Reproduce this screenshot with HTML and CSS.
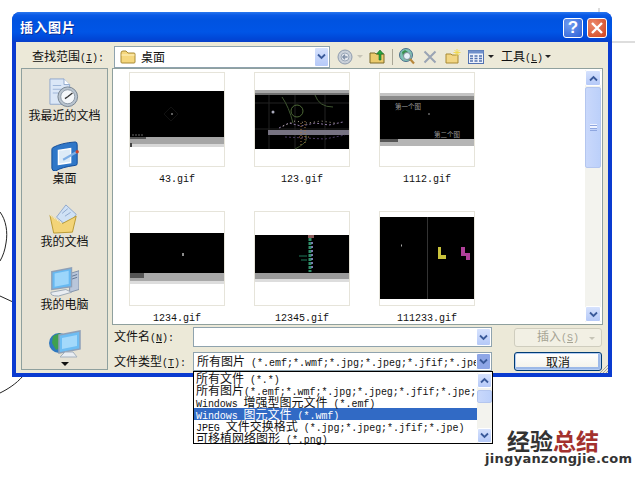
FILE: index.html
```html
<!DOCTYPE html>
<html lang="zh">
<head>
<meta charset="utf-8">
<title>插入图片</title>
<link rel="stylesheet" href="styles.css">
</head>
<body>
<svg class="backdrop" width="635" height="477" viewBox="0 0 635 477">
  <path d="M0 212C6 220 8 232 6 243C5 250 3 256 0 261M0 296L13 302M23 376C16 384 8 389 0 393" class="ink"/>
  <path d="M599 8V13M612 42H635" class="faint"/>
</svg>
<section class="dialog">
  <header class="titlebar">
    <h1 class="title">插入图片</h1>
    <div class="winbtns">
      <span class="winbtn help">?</span>
      <span class="winbtn close"><svg width="14" height="14" viewBox="0 0 14 14"><path d="M2 2L12 12M12 2L2 12" class="closex"/></svg></span>
    </div>
  </header>
  <div class="client">
    <div class="lookup">
      <label class="lookup-label">查找范围<span class="m">(<u>I</u>):</span></label>
      <div class="combo folder-combo">
        <svg class="ficon" width="16" height="14" viewBox="0 0 16 14"><path d="M1 3Q1 1 3 1H6L8 3H14Q15 3 15 4V12Q15 13 14 13H2Q1 13 1 12Z" fill="#f5d77e" stroke="#a88a35"/><path d="M1.500 5H14.500" stroke="#fff3c4"/></svg>
        <span class="combo-text">桌面</span>
        <span class="chev"><svg width="9" height="7" viewBox="0 0 9 7"><path d="M1 1.500L4.500 5L8 1.500" class="chevron"/></svg></span>
      </div>
      <div class="tools">
        <svg class="t-back" width="16" height="16" viewBox="0 0 16 16"><circle cx="8" cy="8" r="7" fill="#c9d0d8" stroke="#8f9cae"/><circle cx="8" cy="8" r="4" fill="#e6e9ee" stroke="#9aa7b8"/><path d="M10.500 8H6M8 5.800L5.800 8L8 10.200" fill="none" stroke="#7f8fa6" stroke-width="1.300"/></svg>
        <i class="mini-arrow dim"></i>
        <svg class="t-up" width="16" height="15" viewBox="0 0 16 15"><path d="M1 4H6L7 5H15V14H1Z" fill="#eccb6d" stroke="#7d6a2b"/><path d="M10 11V5H7.500L11 1L14.500 5H12V11Z" fill="#2aa53c" stroke="#14682a" stroke-width=".6"/></svg>
        <i class="sep"></i>
        <svg class="t-web" width="16" height="17" viewBox="0 0 16 17"><circle cx="7" cy="7" r="6.500" fill="#7fc2b4" stroke="#4c6f8c"/><path d="M3 4L6 2L9 4L7 7L4 8ZM8 9L11 8L11 11L9 12Z" fill="#3a8f4e"/><circle cx="8" cy="8" r="3.500" fill="#e6f1f7" stroke="#7f8b98"/><path d="M11 11L15 15.500" stroke="#b7873c" stroke-width="2.200"/></svg>
        <svg class="t-del" width="14" height="14" viewBox="0 0 14 14"><path d="M1.500 1.500L12.500 12.500M12.500 1.500L1.500 12.500" stroke="#9aa4b4" stroke-width="2"/></svg>
        <svg class="t-new" width="16" height="15" viewBox="0 0 16 15"><path d="M1 5H6L7 6H13V14H1Z" fill="#f2d684" stroke="#a88a35"/><path d="M12 0V7M8.500 3.500H15.500M9.500 1L14.500 6M14.500 1L9.500 6" stroke="#f1d84a" stroke-width=".9"/></svg>
        <svg class="t-view" width="16" height="14" viewBox="0 0 16 14"><rect x=".5" y=".5" width="15" height="13" fill="#eef2fb" stroke="#5272b0"/><rect x=".5" y=".5" width="15" height="3" fill="#6f8fcb"/><path d="M2 6H5M2 8.500H5M2 11H5M6.500 6H9.500M6.500 8.500H9.500M6.500 11H9.500M11 6H14M11 8.500H14M11 11H14" stroke="#5272b0" stroke-width="1.300"/></svg>
        <i class="mini-arrow"></i>
        <span class="tool-menu">工具<span class="m">(<u>L</u>)</span></span>
        <i class="mini-arrow tight"></i>
      </div>
    </div>
    <div class="main">
      <nav class="rail">
        <a class="place">
          <svg class="place-icon" width="30" height="30" viewBox="0 0 32 32"><path d="M1 1H16L22 7V28H1Z" fill="#dbe7f7" stroke="#8ea6cc"/><path d="M16 1V7H22" fill="#fff" stroke="#8ea6cc"/><path d="M4 8H13M4 12H13M4 16H10" stroke="#9bb3d6"/><circle cx="20" cy="20" r="10.500" fill="#b9c4cf" stroke="#75828f"/><circle cx="20" cy="20" r="7.500" fill="#f4f7fa" stroke="#8c98a5"/><path d="M20 20L25 16M20 20L17 22" stroke="#333" stroke-width="1.400"/></svg>
          <span class="place-label">我最近的文档</span>
        </a>
        <a class="place">
          <svg class="place-icon" width="30" height="30" viewBox="0 0 32 32"><path d="M3 7Q12 2 27 1Q29 1 29 4L29 24Q29 26 27 26Q12 28 6 32Q2 32 2 29V9Q2 8 3 7Z" fill="#2f77c8" stroke="#0f4a96"/><path d="M9 10L22 8V23L9 25Z" fill="#dcebf7" stroke="#fff" stroke-width="1.500"/><path d="M14 20L28 12" stroke="#7fb0e6" stroke-width="2.200"/><circle cx="29" cy="11.500" r="1.800" fill="#c9452e"/></svg>
          <span class="place-label">桌面</span>
        </a>
        <a class="place">
          <svg class="place-icon" width="30" height="30" viewBox="0 0 32 32"><path d="M8 14L18 1L29 11L20 24Z" fill="#cfe1f5" stroke="#8ea6cc"/><path d="M14 10L20 5M17 13L23 9" stroke="#8ea6cc"/><path d="M1 12L14 21L29 13L25 30L5 31Z" fill="#f3d478" stroke="#b8972f"/><path d="M1 12L14 21" stroke="#fff3c4"/></svg>
          <span class="place-label">我的文档</span>
        </a>
        <a class="place">
          <svg class="place-icon" width="30" height="30" viewBox="0 0 32 32"><path d="M22 7L32 4V24L22 27Z" fill="#b9c6da" stroke="#7f8fa8"/><path d="M24 10L30 8M24 13L30 11" stroke="#5f7391"/><path d="M3 5L24 1V21L3 24Z" fill="#67b9f2" stroke="#8ea0b8" stroke-width="1.500"/><path d="M6 7L21 4V18L6 21Z" fill="#9cd6fb"/><path d="M2 27L18 24L24 27L10 31Q1 31 2 27Z" fill="#e9edf2" stroke="#9aa6b4"/></svg>
          <span class="place-label">我的电脑</span>
        </a>
        <a class="place">
          <svg class="place-icon" width="32" height="28" viewBox="0 0 32 28"><circle cx="10" cy="13" r="10" fill="#2f78bf"/><path d="M4 6L11 3L14 8L9 13L11 18L7 20L3 13Z" fill="#3fa04f"/><path d="M10 5L31 1V19L10 23Z" fill="#6dbdf3" stroke="#8ea0b8" stroke-width="1.500"/><path d="M13 8L28 5V16L13 19Z" fill="#a3d9fb"/><path d="M11 27L16 22H24L28 27Z" fill="#e9edf2" stroke="#a5b0bd"/></svg>
        </a>
        <i class="rail-more"></i>
      </nav>
      <div class="content">
        <div class="list">
          <div class="thumbs">
            <figure class="file">
              <div class="thumb"><svg width="94" height="93" viewBox="0 0 94 93"><rect y="18" width="94" height="46" fill="#000"/><rect y="64" width="94" height="7" fill="#a6a6a6"/><rect y="71" width="94" height="3" fill="#d8d8d8"/><rect y="64" width="16" height="2" fill="#555"/><path d="M2 62H14" stroke="#666" stroke-dasharray="2 1"/><rect y="70" width="2" height="4" fill="#444"/><path d="M41 41H43" stroke="#bbb"/><path d="M41 34L48 41L41 48L34 41Z" fill="none" stroke="#111"/></svg></div>
              <figcaption class="name">43.gif</figcaption>
            </figure>
            <figure class="file">
              <div class="thumb"><svg width="94" height="93" viewBox="0 0 94 93"><rect y="17" width="94" height="59" fill="#000"/><rect y="17" width="94" height="3" fill="#a8a8a8"/><rect y="20" width="94" height="2" fill="#6f6f6f"/><path d="M0 30H94M0 56H94M14 22V76M40 22V76M70 22V76" stroke="#222"/><circle cx="42" cy="38" r="6" fill="none" stroke="#4d6836"/><path d="M27 24Q34 34 38 50M60 22Q64 34 78 34M46 58Q60 66 40 76" fill="none" stroke="#3f5630"/><circle cx="18" cy="39" r="1.500" fill="#aab"/><rect x="13" y="57" width="81" height="5" fill="#777382"/><path d="M24 55L34 50L46 53L60 50L74 52L88 49" fill="none" stroke="#8f7aa6" stroke-dasharray="2 2"/><path d="M28 53L40 48L52 50L66 48L80 50" fill="none" stroke="#a9a38c" stroke-dasharray="1 3"/><path d="M46 50V72M50 48V70M44 64H54" stroke="#a97843" stroke-dasharray="1 2"/><path d="M30 64L70 66L90 62" fill="none" stroke="#4d3d66" stroke-dasharray="2 2"/></svg></div>
              <figcaption class="name">123.gif</figcaption>
            </figure>
            <figure class="file">
              <div class="thumb"><svg width="94" height="93" viewBox="0 0 94 93"><rect y="20" width="94" height="46" fill="#000"/><rect y="20" width="94" height="3" fill="#c4c4c4"/><rect y="23" width="94" height="4" fill="#8b8b8b"/><rect y="66" width="94" height="7" fill="#b5b5b5"/><rect y="66" width="18" height="3" fill="#555"/><text x="15" y="36" class="thumb-text">第一个图</text><text x="54" y="64" class="thumb-text">第二个图</text><path d="M48 41H50" stroke="#999"/></svg></div>
              <figcaption class="name">1112.gif</figcaption>
            </figure>
            <figure class="file">
              <div class="thumb"><svg width="94" height="93" viewBox="0 0 94 93"><rect y="21" width="94" height="40" fill="#000"/><rect y="61" width="94" height="8" fill="#a8a8a8"/><rect y="69" width="94" height="3" fill="#ddd"/><rect y="61" width="14" height="5" fill="#555"/><path d="M53 41V44" stroke="#bbb" stroke-width="1.500"/></svg></div>
              <figcaption class="name">1234.gif</figcaption>
            </figure>
            <figure class="file">
              <div class="thumb"><svg width="94" height="93" viewBox="0 0 94 93"><rect y="23" width="94" height="38" fill="#000"/><rect y="61" width="94" height="6" fill="#9a9a9a"/><rect y="67" width="94" height="3" fill="#ddd"/><path d="M55 26V60" stroke="#2f8f6a" stroke-width="3" stroke-dasharray="3 1"/><path d="M57 30V58" stroke="#7a7fb0" stroke-width="2" stroke-dasharray="2 2"/><path d="M44 44H52M46 48H52" stroke="#1f7a5a"/><rect x="53" y="23" width="6" height="3" fill="#8a5a5a"/></svg></div>
              <figcaption class="name">12345.gif</figcaption>
            </figure>
            <figure class="file">
              <div class="thumb"><svg width="94" height="93" viewBox="0 0 94 93"><rect y="5" width="94" height="82" fill="#000"/><path d="M47.500 5V87" stroke="#333"/><path d="M21 33.500H22" stroke="#aaa" stroke-width="2"/><path d="M58 35H61V43H66V47H58Z" fill="#c9c23c"/><path d="M81 35H85V41H90V48H86V44H81Z" fill="#b0409a"/></svg></div>
              <figcaption class="name">111233.gif</figcaption>
            </figure>
          </div>
          <div class="vscroll">
            <span class="sbtn"><svg width="9" height="7" viewBox="0 0 9 7"><path d="M1 5.500L4.500 2L8 5.500" class="chevron"/></svg></span>
            <span class="sthumb"><i class="grip"></i></span>
            <span class="strack"></span>
            <span class="sbtn"><svg width="9" height="7" viewBox="0 0 9 7"><path d="M1 1.500L4.500 5L8 1.500" class="chevron"/></svg></span>
          </div>
        </div>
        <div class="form-row name-row">
          <label class="form-label">文件名<span class="m">(<u>N</u>):</span></label>
          <div class="combo input-combo">
            <span class="combo-text"></span>
            <span class="chev"><svg width="9" height="7" viewBox="0 0 9 7"><path d="M1 1.500L4.500 5L8 1.500" class="chevron"/></svg></span>
          </div>
          <button class="btn disabled" type="button"><span class="btn-text">插入<span class="m">(<u>S</u>)</span></span><i class="mini-arrow dim btn-arrow"></i></button>
        </div>
        <div class="form-row type-row">
          <label class="form-label">文件类型<span class="m">(<u>T</u>):</span></label>
          <div class="combo input-combo open">
            <span class="combo-text">所有图片<span class="m"> (*.emf;*.wmf;*.jpg;*.jpeg;*.jfif;*.jpe</span></span>
            <span class="chev pressed"><svg width="9" height="7" viewBox="0 0 9 7"><path d="M1 1.500L4.500 5L8 1.500" class="chevron"/></svg></span>
            <div class="dropdown">
              <ul class="options">
                <li>所有文件<span class="m"> (*.*)</span></li>
                <li>所有图片<span class="m">(*.emf;*.wmf;*.jpg;*.jpeg;*.jfif;*.jpe;</span></li>
                <li><span class="m">Windows </span>增强型图元文件<span class="m"> (*.emf)</span></li>
                <li class="selected"><span class="m">Windows </span>图元文件<span class="m"> (*.wmf)</span></li>
                <li><span class="m">JPEG </span>文件交换格式<span class="m"> (*.jpg;*.jpeg;*.jfif;*.jpe)</span></li>
                <li>可移植网络图形<span class="m"> (*.png)</span></li>
              </ul>
              <div class="dscroll">
                <span class="sbtn"><svg width="9" height="7" viewBox="0 0 9 7"><path d="M1 5.500L4.500 2L8 5.500" class="chevron"/></svg></span>
                <span class="sthumb dthumb"></span>
                <span class="strack"></span>
                <span class="sbtn"><svg width="9" height="7" viewBox="0 0 9 7"><path d="M1 1.500L4.500 5L8 1.500" class="chevron"/></svg></span>
              </div>
            </div>
          </div>
          <button class="btn default" type="button"><span class="btn-text">取消</span></button>
        </div>
      </div>
    </div>
    <svg class="resize" width="8" height="8" viewBox="0 0 8 8"><path d="M8 0L0 8M8 3L3 8M8 6L6 8" stroke="#a9a696"/></svg>
  </div>
</section>
<aside class="watermark">
  <div class="wm-cn">经验<span class="wm-red">总结</span></div>
  <div class="wm-en">jingyanzongjie.com</div>
</aside>
</body>
</html>
```

FILE: styles.css
```css
* { box-sizing: border-box; }
html, body { margin: 0; padding: 0; }
body {
  position: relative;
  width: 635px;
  height: 477px;
  overflow: hidden;
  background: #fff;
  font: 12px/13px "Noto Sans CJK SC", "Liberation Sans", sans-serif;
  color: #111;
  padding: 12px 0 0 12px;
}
.backdrop { position: absolute; left: 0; top: 0; }
.ink { fill: none; stroke: #222; stroke-width: 1; }
.faint { fill: none; stroke: #bbb; stroke-width: 1; }
.m { font: 10px/12px "Liberation Mono", monospace; white-space: pre; }
u { text-decoration: underline; }

.dialog {
  position: relative;
  width: 600px;
  height: 365px;
  display: flex;
  flex-direction: column;
  border-radius: 8px 8px 0 0;
  background: #0a3bd0;
}
.titlebar {
  height: 30px;
  flex: none;
  display: flex;
  align-items: center;
  justify-content: space-between;
  padding: 0 5px 0 8px;
  border-radius: 8px 8px 0 0;
  background: linear-gradient(#2a78ee 0, #0a5ae6 3px, #0053e0 8px, #0055e6 20px, #0046d6 27px, #0a3fc8 30px);
}
.title {
  margin: 0;
  font: bold 13px/16px "Noto Sans CJK SC", sans-serif;
  letter-spacing: 1px;
  color: #fff;
  text-shadow: 1px 1px 0 #0a2f9a;
}
.winbtns { display: flex; gap: 4px; margin-top: 1px; }
.winbtn {
  width: 20px;
  height: 20px;
  border: 1px solid #fff;
  border-radius: 3px;
  display: flex;
  align-items: center;
  justify-content: center;
}
.help {
  background: radial-gradient(circle at 30% 30%, #6f9cf0, #2c5fd6);
  color: #fff;
  font: bold 17px/18px "Liberation Sans", sans-serif;
}
.close { background: radial-gradient(circle at 30% 30%, #ec8a6c, #d0421c); }
.closex { stroke: #fff; stroke-width: 2.4; fill: none; }

.client {
  position: relative;
  flex: 1;
  margin: 0 4px 4px;
  padding: 3px 5px 0;
  background: #ece9d8;
}
.resize { position: absolute; right: 0; bottom: 0; }

.lookup { display: flex; align-items: center; height: 23px; }
.lookup-label { width: 83px; text-align: right; flex: none; white-space: nowrap; }
.folder-combo { margin-left: 10px; width: 216px; flex: none; height: 22px; }
.ficon { flex: none; margin: 0 5px; }
.tools { display: flex; align-items: center; margin-left: 7px; height: 22px; }
.tools > * { flex: none; }
.t-up { margin-left: 6px; }
.sep { width: 1px; height: 16px; background: #a9a696; margin: 0 6px 0 7px; }
.t-del { margin-left: 8px; }
.t-new { margin-left: 8px; }
.t-view { margin-left: 7px; }
.tool-menu { margin-left: 7px; white-space: nowrap; }
.mini-arrow {
  display: block;
  width: 0;
  height: 0;
  margin-left: 4px;
  border: 3px solid transparent;
  border-top: 3px solid #222;
  border-bottom: 0;
}
.mini-arrow.tight { margin-left: 2px; }
.mini-arrow.dim { border-top-color: #c6c4b6; }

.combo {
  position: relative;
  display: flex;
  align-items: center;
  background: #fff;
  border: 1px solid #8fa3ae;
}
.combo-text { flex: 1; min-width: 0; white-space: nowrap; }
.chev, .sbtn {
  flex: none;
  display: flex;
  align-items: center;
  justify-content: center;
  width: 15px;
  border: 1px solid #fff;
  border-radius: 2px;
  background: linear-gradient(#d6e2fd, #b5c9f8);
}
.chev { height: 100%; }
.chev.pressed { background: #8ea6e6; }
.chevron { fill: none; stroke: #3a5a9a; stroke-width: 1.800; }

.main { display: flex; gap: 4px; height: 302px; }
.rail {
  width: 87px;
  flex: none;
  height: 302px;
  padding-top: 9px;
  display: flex;
  flex-direction: column;
  align-items: center;
  background: #e6e2d4;
  border: 1px solid #8fa09e;
}
.place {
  display: flex;
  flex-direction: column;
  align-items: center;
  height: 63px;
  flex: none;
}
.place:last-of-type { height: 32px; }
.place-icon { flex: none; display: block; }
.place-label { white-space: nowrap; height: 13px; }
.rail-more {
  display: block;
  width: 0;
  height: 0;
  flex: none;
  border: 4px solid transparent;
  border-top: 4px solid #111;
  border-bottom: 0;
}

.content { flex: 1; min-width: 0; }
.list {
  display: flex;
  height: 257px;
  background: #fff;
  border: 1px solid #8fa09e;
}
.thumbs {
  flex: 1;
  padding: 3px 0 0 16px;
  display: grid;
  grid-template-columns: repeat(3, 96px);
  grid-auto-rows: 113px;
  column-gap: 29px;
  row-gap: 26px;
  align-content: start;
}
.file { margin: 0; }
.thumb { width: 96px; height: 95px; border: 1px solid #e6e4da; background: #fff; }
.thumb svg { display: block; }
.thumb-text { font: 6.500px "Noto Sans CJK SC", sans-serif; fill: #9a9a9a; }
.name {
  margin-top: 8px;
  text-align: center;
  font: 10px/10px "Liberation Mono", monospace;
}
.vscroll {
  flex: none;
  width: 16px;
  margin: 1px 1px 2px 0;
  display: flex;
  flex-direction: column;
  background: #f3f3ee;
}
.sbtn { width: 100%; height: 16px; }
.sthumb {
  display: flex;
  align-items: center;
  justify-content: center;
  height: 81px;
  margin-top: 1px;
  border: 1px solid #b4c6ef;
  border-radius: 2px;
  background: linear-gradient(90deg, #c9d8fb, #bcd0fa);
}
.grip { display: block; width: 7px; height: 7px; border-top: 1px solid #eef3ff; border-bottom: 1px solid #8ea6e0; background: linear-gradient(#8ea6e0 1px, #eef3ff 1px, #eef3ff 3px, #8ea6e0 3px, #8ea6e0 4px, transparent 4px); }
.strack { flex: 1; }

.form-row { display: flex; align-items: center; }
.name-row { margin-top: 2px; height: 20px; }
.type-row { margin-top: 5px; height: 19px; }
.form-label { width: 81px; padding-left: 2px; flex: none; white-space: nowrap; }
.input-combo { width: 299px; height: 100%; flex: none; padding-left: 3px; }
.btn {
  width: 88px;
  height: 19px;
  flex: none;
  margin-left: 22px;
  padding: 0;
  display: flex;
  align-items: center;
  justify-content: center;
  position: relative;
  border-radius: 3px;
  font: 12px/13px "Noto Sans CJK SC", sans-serif;
  background: #f8f7f0;
}
.btn.disabled { border: 1px solid #cfcdbe; color: #a5a393; background: #f2f0e4; }
.btn.default {
  border: 1px solid #003c74;
  color: #111;
  background: linear-gradient(#fff, #f4f3ec 85%, #d6d0c5);
  box-shadow: inset 0 0 0 1px #b4ccf2, inset -1px -1px 0 2px #9db9e8;
}
.btn-arrow { position: absolute; right: 6px; top: 8px; }

.dropdown {
  position: absolute;
  left: -1px;
  top: 18px;
  width: 300px;
  height: 73px;
  z-index: 5;
  display: flex;
  background: #fff;
  border: 1px solid #000;
}
.options {
  flex: 1;
  min-width: 0;
  margin: 0;
  padding: 0;
  list-style: none;
}
.options li {
  height: 12px;
  padding-left: 2px;
  font: 12px/12px "Noto Sans CJK SC", sans-serif;
  white-space: nowrap;
}
.options .m { letter-spacing: -.05px; }
.options li.selected { background: #316ac5; color: #fff; }
.dscroll {
  flex: none;
  width: 15px;
  margin-top: 1px;
  display: flex;
  flex-direction: column;
  background: #f3f3ee;
}
.dscroll .sbtn { height: 15px; }
.dthumb { height: 13px; margin-top: 2px; }

.watermark {
  position: absolute;
  left: 485px;
  top: 428px;
  width: 136px;
  text-align: center;
  z-index: 6;
}
.wm-cn {
  font: bold 23px/24px "Noto Sans CJK SC", sans-serif;
  color: #333;
}
.wm-red { color: #a3312e; }
.wm-en {
  font: bold 13px/14px "DejaVu Sans", sans-serif;
  letter-spacing: .3px;
  color: #333;
  white-space: nowrap;
}
```
